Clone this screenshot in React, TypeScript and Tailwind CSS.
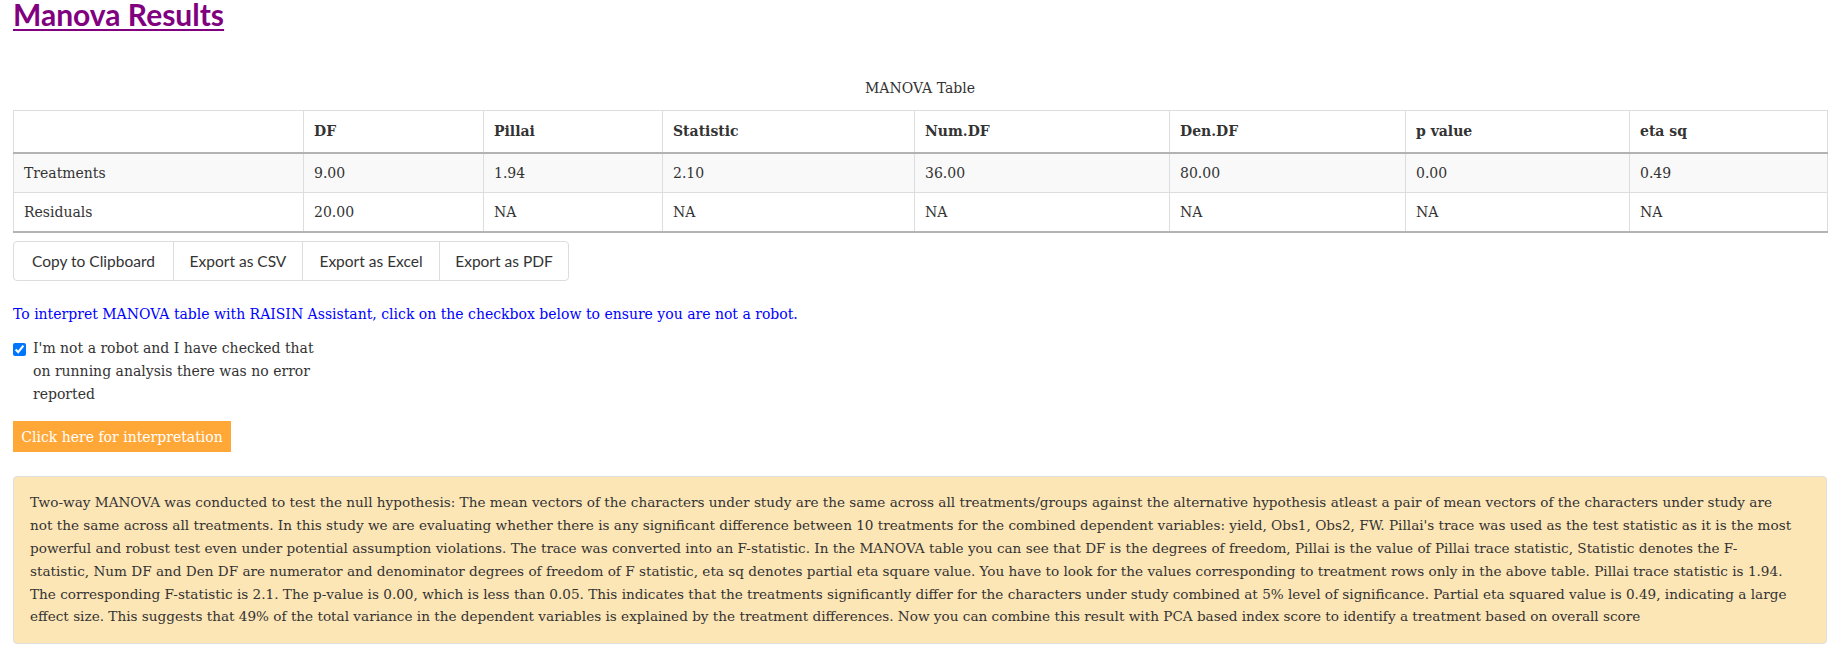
import React from 'react';

const headers = ['', 'DF', 'Pillai', 'Statistic', 'Num.DF', 'Den.DF', 'p value', 'eta sq'];
const colWidths = ['w-[290px]', 'w-[180px]', 'w-[179px]', 'w-[252px]', 'w-[255px]', 'w-[236px]', 'w-[224px]', 'w-[198px]'];

const rows = [
  ['Treatments', '9.00', '1.94', '2.10', '36.00', '80.00', '0.00', '0.49'],
  ['Residuals', '20.00', 'NA', 'NA', 'NA', 'NA', 'NA', 'NA'],
];

const exportButtons = [
  { label: 'Copy to Clipboard', w: 'w-[159px]' },
  { label: 'Export as CSV', w: 'w-[129px]' },
  { label: 'Export as Excel', w: 'w-[137px]' },
  { label: 'Export as PDF', w: 'w-[129px]' },
];

// line breaks kept as in the original rendering
const interpretation = [
  'Two-way MANOVA was conducted to test the null hypothesis: The mean vectors of the characters under study are the same across all treatments/groups against the alternative hypothesis atleast a pair of mean vectors of the characters under study are',
  "not the same across all treatments. In this study we are evaluating whether there is any significant difference between 10 treatments for the combined dependent variables: yield, Obs1, Obs2, FW. Pillai's trace was used as the test statistic as it is the most",
  'powerful and robust test even under potential assumption violations. The trace was converted into an F-statistic. In the MANOVA table you can see that DF is the degrees of freedom, Pillai is the value of Pillai trace statistic, Statistic denotes the F-',
  'statistic, Num DF and Den DF are numerator and denominator degrees of freedom of F statistic, eta sq denotes partial eta square value. You have to look for the values corresponding to treatment rows only in the above table. Pillai trace statistic is 1.94.',
  'The corresponding F-statistic is 2.1. The p-value is 0.00, which is less than 0.05. This indicates that the treatments significantly differ for the characters under study combined at 5% level of significance. Partial eta squared value is 0.49, indicating a large',
  'effect size. This suggests that 49% of the total variance in the dependent variables is explained by the treatment differences. Now you can combine this result with PCA based index score to identify a treatment based on overall score',
];

const App: React.FC = () => {
  return (
    <div className="min-h-[658px] bg-white font-['DejaVu_Serif',serif] text-[14px] leading-[22.8px] text-[#333]">
      <div className="ml-[13px] w-[1814px]">
        <h2 className="font-['Lato',sans-serif] text-[30px] leading-[28px] font-bold text-[#800080] underline decoration-2 underline-offset-[3px]">
          <a href="#">Manova Results</a>
        </h2>

        <div className="mt-[49px] text-center">MANOVA Table</div>

        <table className="mt-[10px] w-full table-fixed border-collapse">
          <colgroup>
            {colWidths.map((w, i) => (
              <col key={i} className={w} />
            ))}
          </colgroup>
          <thead>
            <tr className="h-[43px]">
              {headers.map((h, i) => (
                <th
                  key={i}
                  className="border border-[#ddd] border-b-2 border-b-[#b3b3b3] px-[10px] text-left font-bold"
                >
                  {h}
                </th>
              ))}
            </tr>
          </thead>
          <tbody>
            {rows.map((r, ri) => (
              <tr key={ri} className={ri === 0 ? 'h-[39px] bg-[#f9f9f9]' : 'h-[40px] bg-white'}>
                {r.map((c, ci) => (
                  <td
                    key={ci}
                    className={`border border-[#ddd] px-[10px] ${ri === rows.length - 1 ? 'border-b-2 border-b-[#b3b3b3]' : ''}`}
                  >
                    {c}
                  </td>
                ))}
              </tr>
            ))}
          </tbody>
        </table>

        <div className="mt-[8px] inline-flex h-[40px] rounded border border-[#ddd] font-['Lato',sans-serif] text-[15.5px] text-[#333]">
          {exportButtons.map((b, i) => (
            <button
              key={b.label}
              className={`${b.w} flex items-center justify-center ${i > 0 ? 'border-l border-[#ddd]' : ''}`}
            >
              {b.label}
            </button>
          ))}
        </div>

        <p className="mt-[22px] text-[#0000ff]">
          To interpret MANOVA table with RAISIN Assistant, click on the checkbox below to ensure you are not a robot.
        </p>

        <label className="mt-[11px] flex w-[310px] items-start gap-[7px]">
          <input type="checkbox" defaultChecked className="m-0 mt-[6px] h-[13px] w-[13px] shrink-0" />
          <span>
            I'm not a robot and I have checked that
            <br />
            on running analysis there was no error
            <br />
            reported
          </span>
        </label>

        <button className="mt-[16px] flex h-[31px] w-[218px] items-center justify-center bg-[#ffa837] text-white">
          Click here for interpretation
        </button>

        <div className="mt-[24px] rounded border border-[#dedede] bg-[#fde6b6] px-4 pt-[14px] pb-[15px] text-[13.6px]">
          {interpretation.map((line, i) => (
            <div key={i} className="whitespace-nowrap">
              {line}
            </div>
          ))}
        </div>
      </div>
    </div>
  );
};

export default App;
